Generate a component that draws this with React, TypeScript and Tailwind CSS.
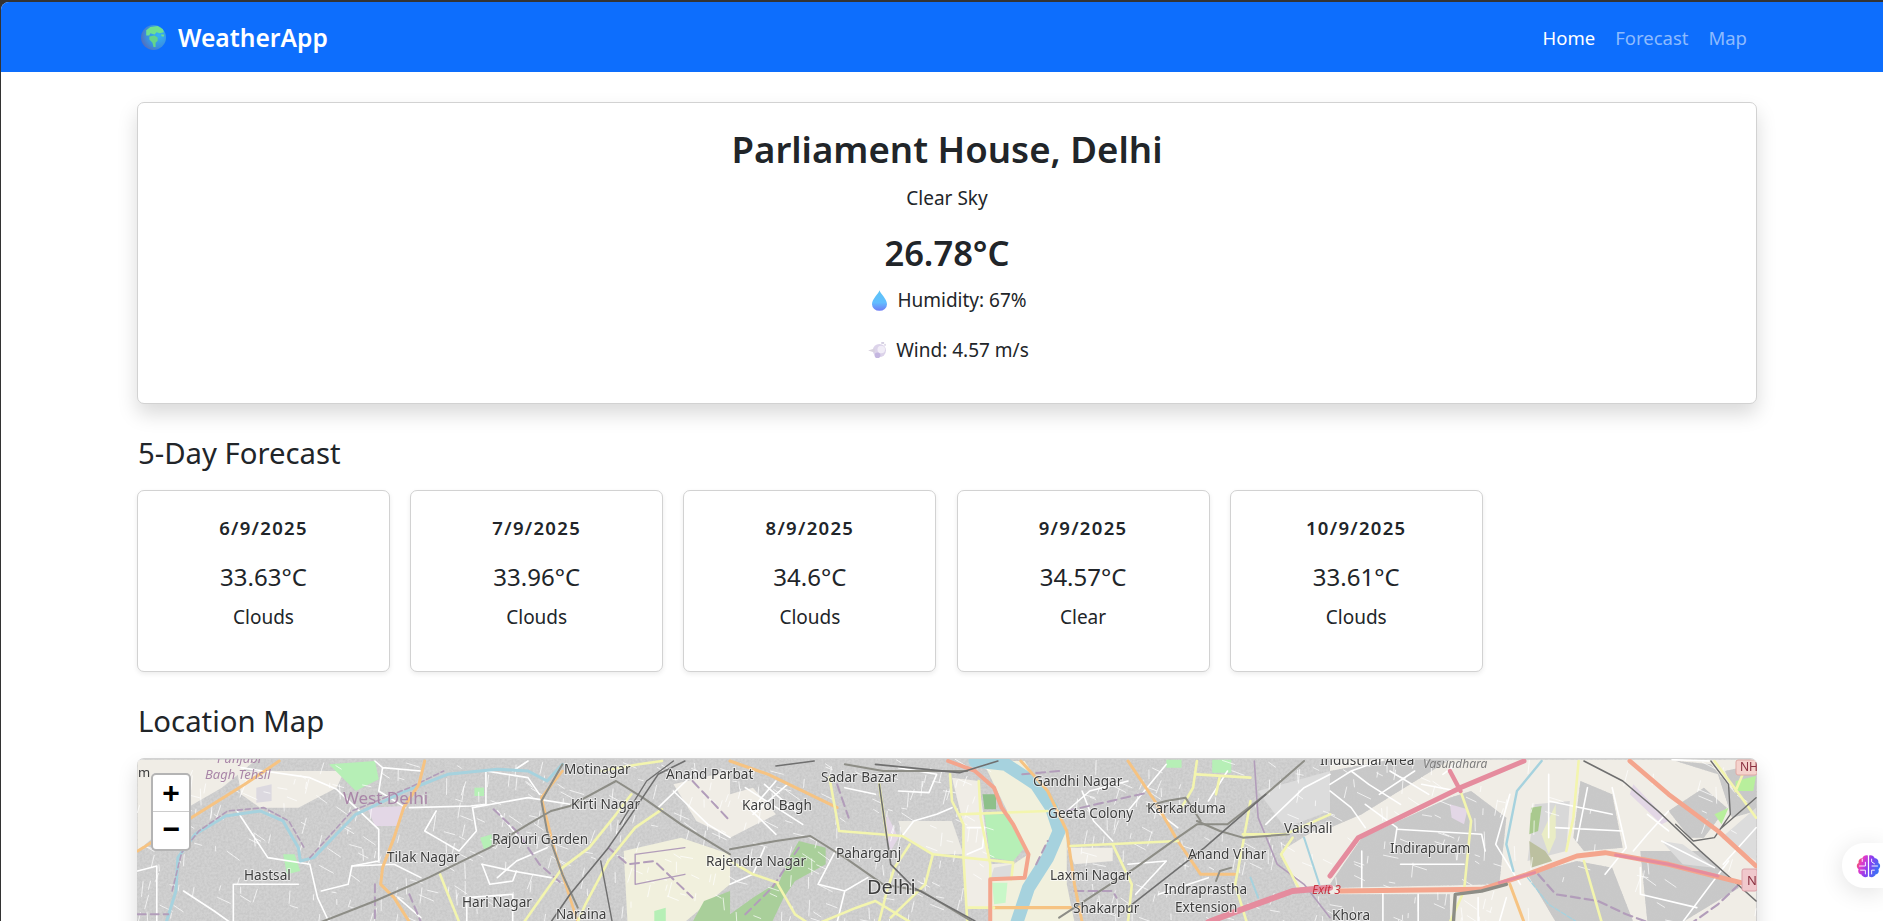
import React from "react";

const forecast = [
  { date: "6/9/2025", temp: "33.63°C", desc: "Clouds" },
  { date: "7/9/2025", temp: "33.96°C", desc: "Clouds" },
  { date: "8/9/2025", temp: "34.6°C", desc: "Clouds" },
  { date: "9/9/2025", temp: "34.57°C", desc: "Clear" },
  { date: "10/9/2025", temp: "33.61°C", desc: "Clouds" },
];

const WHITE = "#ffffff";
const YELLOW = "#f3f5ae";
const ORANGE = "#f6c382";
const TRUNK = "#f4a58d";
const PINK = "#e58c9e";
const METRO = "#8d8d86";
const RAIL = "#6f6f6f";
const ADMIN = "#b29dba";
const WATER = "#a6d2de";
const BUILT = "#c9c9c9";

type Line = [string, number, string, string?];

// coordinates below are in crop space, each group gets its own transform
const westFills: [string, string][] = [
  ["#f0ede6", "M20 26L330 26L240 110L120 190L60 260L20 300Z"],
  ["#f0ede6", "M280 60L560 60L540 110L440 170L340 170L290 130Z"],
  ["#f1f0dd", "M1290 300L1440 260L1568 310L1568 400L1450 513L1300 513Z"],
  ["#f0ede6", "M1420 100L1568 60L1568 260L1480 210Z"],
  ["#dcd9e0", "M330 110L370 100L370 150L330 155Z"],
  ["#e3d7e6", "M620 170L720 165L700 225L640 225Z"],
  ["#b6efb6", "M520 40L640 30L650 85L590 120Z"],
  ["#b6efb6", "M400 310L430 310L445 360L410 370Z"],
  ["#b6efb6", "M915 260L945 250L945 290L925 295Z"],
  ["#b6efb6", "M900 110L925 110L925 135L900 135Z"],
  ["#a9cf9a", "M1470 513L1500 450L1568 420L1568 513Z"],
  ["#b6efb6", "M1370 480L1400 470L1400 513L1370 513Z"],
];

const westLines: Line[] = [
  [WHITE, 1.6, "M290 50L470 80L540 115L590 170L650 235L650 330L580 345L570 400L500 420"],
  [WHITE, 1.6, "M280 180L360 320L470 340L490 440L520 513"],
  [WHITE, 1.6, "M270 513L270 400L440 400"],
  [WHITE, 1.6, "M20 360L70 345L70 513"],
  [WHITE, 1.6, "M140 420L220 480L260 513"],
  [WHITE, 1.6, "M800 180L770 240L800 260L860 300L905 240L895 170L1040 140L1150 160"],
  [WHITE, 1.6, "M730 170L890 165L930 160L930 60L1040 80L1070 130"],
  [WHITE, 1.6, "M760 60L660 50L640 30M660 50L650 120L720 170"],
  [WHITE, 1.6, "M920 340L1000 360L1100 380M960 380L1010 330L1090 290"],
  [WHITE, 1.6, "M920 340L940 400L1000 390L1010 360M1000 60L1040 30"],
  [WHITE, 1.6, "M580 345L690 340L760 380M960 180L1030 280M700 440L760 500"],
  [WHITE, 1.6, "M880 440L1000 430L1000 513M880 440L880 513"],
  [WHITE, 1.6, "M1420 120L1510 220L1568 260M1380 170L1480 60"],
  [ADMIN, 1.4, "M1320 310L1450 290M1320 310L1320 400L1450 370"],
  [WATER, 3, "M95 513L120 420L125 320L170 250L250 195L340 180L400 210L440 290L445 330L480 320L590 190L720 120L830 70L960 55L1040 60L1090 90L1130 40"],
  [ADMIN, 1.6, "M110 420L135 305L180 240L255 180L350 170L415 210L455 290M470 320L580 180L730 110L820 60", "5 3"],
  [ADMIN, 2, "M20 490L100 490M640 400L640 513M730 430L760 513M950 175L1010 240L1070 340L1130 400", "8 5"],
  [ADMIN, 2, "M1250 290L1300 340L1370 330L1470 440M1470 90L1568 210", "9 5"],
  [ORANGE, 3, "M20 300L160 200L300 100L390 30"],
  [ORANGE, 3, "M770 30L755 100L715 170L690 260L660 350L655 400L690 440L730 513"],
  [ORANGE, 2.6, "M1130 60L1075 140L1110 300L1170 513"],
  [YELLOW, 2.6, "M1230 60L1330 40L1390 30"],
  [YELLOW, 2.6, "M1390 175L1320 230L1250 330L1190 460L1170 513"],
  [YELLOW, 2.6, "M1310 130L1270 190L1200 290L1130 350L1050 480L1030 513"],
  [YELLOW, 2.6, "M810 370L860 513"],
  [METRO, 2, "M500 513L640 450L780 380L940 290L1040 220L1100 180L1150 165L1270 90L1340 140L1440 220L1568 310"],
  [METRO, 2, "M1130 40L1075 150L1090 240L1130 370L1170 470"],
  [RAIL, 1.6, "M1450 30L1380 70L1310 190L1250 290L1150 430L1100 513"],
  [RAIL, 1.4, "M1420 30L1350 90L1280 220M1230 330L1260 513"],
];

const centreFills: [string, string][] = [
  ["#f1f0dd", "M660 30L770 30L880 230L880 400L900 513L680 513L680 385L780 310Z"],
  ["#f0ede6", "M580 80L650 90L680 340L740 335L735 385L680 385L680 470L620 470L610 320L610 220Z"],
  ["#eceae3", "M440 210L580 210L610 310L530 310L450 255Z"],
  ["#b6efb6", "M665 190L730 190L770 290L740 330L680 320Z"],
  ["#c8f7c8", "M685 395L725 395L720 455L690 460Z"],
  ["#a9cf9a", "M0 490L60 440L130 390L150 330L180 270L250 290L250 340L170 390L140 440L110 513L0 513Z"],
  ["#8ec08a", "M660 130L695 130L695 175L665 175Z"],
  ["#f0ede6", "M880 290L1000 290L1000 330L900 340Z"],
  ["#f0ede6", "M0 130L60 110L120 190L0 260Z"],
  ["#f0ede6", "M1440 300L1568 210L1568 400L1480 410Z"],
  ["#dcdcdc", "M690 350L740 340L735 385L680 385Z"],
  ["#dcdcdc", "M1380 120L1568 60L1568 180L1450 230Z"],
  ["#b6efb6", "M1140 26L1180 26L1180 50L1140 50ZM1260 26L1310 26L1310 65L1260 65Z"],
  ["#e3d7e6", "M410 190L440 260L420 300L405 240Z"],
];

const centreLines: Line[] = [
  [WHITE, 1.6, "M40 110L190 220M60 190L150 100M30 150L120 250M90 100L180 190M120 90L60 170"],
  [WHITE, 1.6, "M0 400L60 370L90 290M280 290L230 400L300 420L360 380M300 420L280 513"],
  [WHITE, 1.6, "M450 255L480 210L540 190L580 170M620 230L665 230L660 290L620 310"],
  [WHITE, 1.6, "M880 180L940 120L1040 90M920 120L950 210L1000 270M1040 340L1140 330L1060 430M1120 430L1250 380"],
  [WHITE, 1.6, "M1090 160L1170 230M1140 40L1040 180M1400 220L1500 110L1568 70M1250 150L1300 60"],
  [WHITE, 1.6, "M440 50L540 70L520 125L440 120M300 110L380 130"],
  [WATER, 13, "M640 30L720 40L800 100L840 170L860 240L830 320L780 410L750 513"],
  [WATER, 2, "M1360 380L1380 440M1500 260L1540 400"],
  [ADMIN, 2, "M280 100L310 200M860 60L760 70M880 180L1090 125M900 420L1000 420L1010 440", "9 5"],
  [ADMIN, 1.6, "M1370 30L1380 200L1430 340L1500 400L1568 500"],
  [ADMIN, 2, "M40 490L110 410L180 290M800 340L830 270", "8 5"],
  [ORANGE, 3, "M0 30L100 70L280 170"],
  [ORANGE, 3, "M760 30L830 120L880 240L900 400L920 513"],
  [ORANGE, 3, "M1040 30L1110 150L1170 270L1230 370L1320 370"],
  [ORANGE, 3.4, "M690 470L890 470"],
  [YELLOW, 2.6, "M600 190L830 180"],
  [YELLOW, 2.6, "M575 70L580 150L610 220L610 320L620 513M650 90L655 200L680 340L680 470"],
  [YELLOW, 2.6, "M450 255L530 310L740 335L735 385M260 80L285 240L450 255M390 100L410 260"],
  [YELLOW, 2.6, "M390 510L410 420L430 350L470 280M530 310L510 400L420 500"],
  [YELLOW, 2.6, "M125 400L170 490L200 513M0 330L60 370L125 395M240 513L330 470L380 450L470 513"],
  [YELLOW, 2.6, "M620 470L690 470M890 285L1170 270M1000 280L1050 400L1040 513"],
  [YELLOW, 2.6, "M1220 30L1210 110L1180 170M1220 70L1360 80M1280 75L1270 130M1360 150L1340 280L1320 400L1350 513"],
  [YELLOW, 2.6, "M1568 190L1450 250L1340 250M1470 260L1440 310L1490 420"],
  [TRUNK, 4, "M570 30L640 60L690 110L710 170L740 220L780 310L770 380L680 385L680 513"],
  [PINK, 6, "M1250 513L1350 470L1470 420L1568 410"],
  [METRO, 2, "M0 295L120 270L210 255L300 320L400 400L500 420L630 510"],
  [METRO, 2, "M860 500L1060 350L1170 260L1220 220L1300 220L1400 130L1500 30"],
  [METRO, 2, "M1220 210L1280 240L1340 260L1460 250M1270 390L1280 360L1310 350"],
  [METRO, 2, "M1090 165L1140 150L1190 140L1230 210M300 40L400 60L500 60L620 60"],
  [RAIL, 1.6, "M390 100L410 260L420 340L480 410L640 510"],
  [RAIL, 1.6, "M120 45L220 30M380 40L600 65L700 30M1040 470L1240 290L1400 130"],
];

const eastFills: [string, string][] = [
  ["#f0ede6", "M0 26L1208 26L1208 513L0 513Z"],
  [BUILT, "M0 60L170 26L340 26L90 190L0 230Z"],
  [BUILT, "M90 260L340 140L400 120L500 200L480 400L20 410L0 400Z"],
  [BUILT, "M710 90L800 130L830 290L720 300L690 260Z"],
  ["#d8d8d8", "M580 160L680 150L670 300L560 330Z"],
  [BUILT, "M880 300L1050 300L1160 410L1000 513L900 513Z"],
  [BUILT, "M560 370L700 330L800 350L860 513L640 513Z"],
  [BUILT, "M960 180L1060 110L1125 170L1060 260L1020 260Z"],
  [BUILT, "M980 30L1080 40L1150 130L1120 60L1208 40L1208 180L1140 200L1100 70Z"],
  [BUILT, "M0 430L340 430L340 513L0 513Z"],
  ["#dcdcdc", "M1110 260L1208 170L1208 330ZM940 270L1000 280L1090 350L1000 340Z"],
  ["#a9c98e", "M570 170L600 165L590 240L565 250Z"],
  ["#bcc0a0", "M565 270L610 300L630 330L570 350Z"],
  ["#e9ecc5", "M600 250L640 160L640 260L620 310Z"],
  ["#b8ef9c", "M1090 190L1130 170L1110 220ZM1150 90L1208 75L1200 120L1150 120Z"],
  ["#e3d7e6", "M340 160L390 175L380 220L345 200ZM860 100L960 210L940 220L850 130Z"],
];

const eastLines: Line[] = [
  [WHITE, 1.6, "M0 100L60 60L110 100M60 60L150 26M110 100L200 160M170 60L280 130M240 60L140 130M100 160L190 230L180 300"],
  [WHITE, 1.6, "M190 235L430 250L440 300M90 300L90 420M200 340L380 340M150 420L150 513M250 513L250 430"],
  [WHITE, 1.6, "M0 120L60 170L100 230M370 30L320 70M260 100L360 120"],
  [WHITE, 1.6, "M510 130L470 280L540 400M620 70L620 260M620 150L800 190M730 110L700 270M640 230L830 240"],
  [WHITE, 1.6, "M800 110L840 290L780 370M860 300L900 250L960 180M880 350L880 430L1040 470M1000 513L1080 400L1130 330"],
  [WHITE, 1.6, "M940 270L1090 350M1115 340L1208 230M900 190L960 240M970 26L1075 30"],
  [WHITE, 1.6, "M420 440L420 513M480 513L500 440"],
  [WATER, 2.4, "M600 30L530 120L500 280L520 360"],
  [WATER, 1.4, "M560 380L620 460L700 513", "5 2"],
  [ADMIN, 2.2, "M590 370L640 430L760 450L840 490L900 513M1160 400L1100 460L1030 513", "9 5"],
  [ORANGE, 3, "M510 400L550 513"],
  [YELLOW, 2.6, "M370 120L400 210L380 420L340 513"],
  [YELLOW, 2.6, "M705 30L690 200L670 300M720 330L770 513"],
  [YELLOW, 2.6, "M1090 30L1160 130L1208 200M1170 70L1150 120"],
  [PINK, 4.4, "M340 60L370 120"],
  [PINK, 5, "M0 375L80 260L370 110L550 30"],
  [RAIL, 1.6, "M720 30L830 90L930 180L1050 300L1208 450"],
  [RAIL, 1.4, "M1080 30L1130 100L1135 190L1090 260L1030 270L980 220M1100 240L1208 140"],
  [TRUNK, 5, "M30 420L430 415L560 370L700 315L780 305L960 340L1165 395"],
  [PINK, 3, "M810 312L960 340L1100 375M480 395L580 365"],
  [METRO, 3.4, "M350 513L355 430L430 420L500 400"],
  [TRUNK, 4.6, "M850 30L960 130L1100 240L1208 345"],
];

// side streets, too many to trace by hand: seeded so every run looks the same
function buildStreets() {
  let seed = 20250906;
  const rnd = () => {
    seed = (seed * 1664525 + 1013904223) % 4294967296;
    return seed / 4294967296;
  };
  let d = "";
  for (let i = 0; i < 760; i++) {
    const x = 137 + rnd() * 1620;
    const y = 758 + rnd() * 163;
    // keep the river banks and the far east clean
    if (x > 985 && x < 1075) continue;
    if (x > 1500 && rnd() < 0.7) continue;
    const tilt = rnd() < 0.5 ? 0.15 : 1.45;
    const angle = tilt + rnd() * 0.5;
    const len = 5 + rnd() * 12;
    d += `M${x.toFixed(1)} ${y.toFixed(1)}L${(x + Math.cos(angle) * len).toFixed(1)} ${(y + Math.sin(angle) * len).toFixed(1)}`;
  }
  return d;
}

const streets = buildStreets();

type Label = [string, number, number, number?];

const labels: Label[] = [
  ["Motinagar", 564, 773],
  ["Anand Parbat", 666, 778],
  ["Kirti Nagar", 571, 808],
  ["Rajouri Garden", 492, 843],
  ["Tilak Nagar", 387, 861],
  ["Hastsal", 244, 879],
  ["Hari Nagar", 462, 906],
  ["Naraina", 556, 918],
  ["Rajendra Nagar", 706, 865],
  ["Sadar Bazar", 821, 781],
  ["Karol Bagh", 742, 809],
  ["Gandhi Nagar", 1033, 785],
  ["Geeta Colony", 1048, 817],
  ["Karkarduma", 1147, 812],
  ["Vaishali", 1284, 832],
  ["Paharganj", 836, 857],
  ["Anand Vihar", 1188, 858],
  ["Laxmi Nagar", 1050, 879],
  ["Delhi", 867, 893, 20],
  ["Indraprastha", 1164, 893],
  ["Extension", 1175, 911],
  ["Shakarpur", 1073, 912],
  ["Industrial Area", 1320, 764],
  ["Indirapuram", 1390, 852],
  ["Khora", 1332, 919],
];

function Strokes({ lines }: { lines: Line[] }) {
  return (
    <>
      {lines.map(([color, width, d, dash], i) => (
        <path
          key={i}
          d={d}
          fill="none"
          stroke={color}
          strokeWidth={width}
          strokeDasharray={dash}
          strokeLinecap="round"
          strokeLinejoin="round"
          vectorEffect="non-scaling-stroke"
        />
      ))}
    </>
  );
}

function Fills({ fills }: { fills: [string, string][] }) {
  return (
    <>
      {fills.map(([color, d], i) => (
        <path key={i} d={d} fill={color} filter={color === BUILT ? "url(#urban)" : undefined} />
      ))}
    </>
  );
}

function MapTiles() {
  return (
    <svg viewBox="137 758 1620 163" className="block w-full h-[163px] blur-[0.55px]">
      <defs>
        <filter id="urban" x="0" y="0" width="100%" height="100%">
          <feTurbulence type="fractalNoise" baseFrequency="0.42" numOctaves="2" seed="4" />
          <feColorMatrix values="0 0 0 0 0.58  0 0 0 0 0.58  0 0 0 0 0.58  2.4 0 0 0 -0.75" />
          <feComposite in2="SourceGraphic" operator="in" result="speck" />
          <feMerge>
            <feMergeNode in="SourceGraphic" />
            <feMergeNode in="speck" />
          </feMerge>
        </filter>
      </defs>
      <rect x="137" y="758" width="1620" height="163" fill="#d2d2d2" filter="url(#urban)" />
      <g transform="translate(130 750) scale(0.3827 0.3333)">
        <Fills fills={westFills} />
      </g>
      <g transform="translate(730 750) scale(0.3827 0.3333)">
        <Fills fills={centreFills} />
      </g>
      <g transform="translate(1330 750) scale(0.3527 0.3333)">
        <Fills fills={eastFills} />
      </g>
      <path d={streets} fill="none" stroke="#ffffff" strokeWidth="1" strokeOpacity="0.7" />
      <g transform="translate(130 750) scale(0.3827 0.3333)">
        <Strokes lines={westLines} />
      </g>
      <g transform="translate(730 750) scale(0.3827 0.3333)">
        <Strokes lines={centreLines} />
      </g>
      <g transform="translate(1330 750) scale(0.3527 0.3333)">
        <Strokes lines={eastLines} />
      </g>
      <rect x="1736" y="759" width="21" height="15" rx="2" fill="#f5d2cc" stroke="#e0a9a4" />
      <rect x="1742" y="868" width="15" height="22" rx="2" fill="#f0c8cc" stroke="#dca0a8" />
      <g fontFamily="'Noto Sans', sans-serif">
        {labels.map(([text, x, y, size]) => (
          <text key={text} x={x} y={y} fontSize={size ?? 13.6} fill="#3d3d3d" stroke="#ffffff" strokeOpacity={0.6} strokeWidth={1.8} paintOrder="stroke">
            {text}
          </text>
        ))}
        <text x="343" y="803" fontSize="17" fill="#a986a8">West Delhi</text>
        <text x="205" y="778" fontSize="13" fontStyle="italic" fill="#a986a8">Bagh Tehsil</text>
        <text x="217" y="762" fontSize="13" fontStyle="italic" fill="#a986a8">Punjabi</text>
        <text x="1423" y="767" fontSize="12" fontStyle="italic" fill="#7d7d7d">Vasundhara</text>
        <text x="1312" y="893" fontSize="12" fontStyle="italic" fill="#c8323f">Exit 3</text>
        <text x="138" y="776" fontSize="13" fill="#3d3d3d">m</text>
        <text x="1740" y="770" fontSize="12" fill="#8a3040">NH</text>
        <text x="1747" y="884" fontSize="13" fill="#8a3040">N</text>
      </g>
    </svg>
  );
}

function GlobeIcon() {
  return (
    <svg viewBox="0 0 24 24" className="w-[25px] h-[25px] shrink-0">
      <defs>
        <radialGradient id="sea" cx="0.7" cy="0.4" r="0.8">
          <stop offset="0" stopColor="#35b4f4" />
          <stop offset="0.6" stopColor="#3a8fe0" />
          <stop offset="1" stopColor="#5b62b0" />
        </radialGradient>
      </defs>
      <circle cx="12" cy="12" r="12" fill="url(#sea)" />
      <path d="M5 5L9 2L16 1L21 4L22 7L18 8L15 7L13 9L9 8L8 10L5 10Z" fill="#6fe08f" />
      <path d="M8 11L13 10L16 12L16 15L14 17L14 21L12 21L11 17L8 14Z" fill="#64d48a" />
      <path d="M19 9L22 9L22 11L20 11Z" fill="#6fe08f" />
    </svg>
  );
}

function DropIcon() {
  return (
    <svg viewBox="0 0 16 22" className="w-[15px] h-[21px] shrink-0">
      <defs>
        <linearGradient id="drop" x1="0" y1="0" x2="0" y2="1">
          <stop offset="0" stopColor="#5cc4f5" />
          <stop offset="0.6" stopColor="#62bdff" />
          <stop offset="1" stopColor="#6f7cf5" />
        </linearGradient>
      </defs>
      <path d="M8 0C9 4 16 9 16 15A8 7 0 0 1 0 15C0 9 7 4 8 0Z" fill="url(#drop)" />
    </svg>
  );
}

function WindIcon() {
  return (
    <svg viewBox="0 0 20 18" className="w-[19px] h-[17px] shrink-0 blur-[0.4px]">
      <circle cx="12" cy="9" r="7" fill="#dcd3ea" />
      <circle cx="14" cy="8" r="4" fill="#f1edf7" />
      <circle cx="10" cy="14" r="3" fill="#c4b6e0" />
      <path d="M0 9L7 7L7 11Z" fill="#d8d2de" />
      <rect x="14" y="0" width="3" height="2" fill="#d5cfe2" />
      <rect x="17" y="2" width="2" height="2" fill="#e0dbe9" />
    </svg>
  );
}

function BrainIcon() {
  return (
    <svg viewBox="0 0 24 24" className="w-[25px] h-[26px] blur-[0.3px]">
      <defs>
        <linearGradient id="brain" x1="0" y1="0" x2="1" y2="0.4">
          <stop offset="0" stopColor="#f97316" />
          <stop offset="0.3" stopColor="#e33bc8" />
          <stop offset="0.6" stopColor="#8b3df0" />
          <stop offset="1" stopColor="#3f6ff5" />
        </linearGradient>
      </defs>
      <path
        d="M11.4 2V22C9 23.5 6 22.5 5 20C2.5 19.5 1.5 17 2.5 15C0 13 0.5 10 2.5 9C2 6 4 4.5 6 4.5C7 2 9.5 1 11.4 2ZM12.6 2C14.5 1 17 2 18 4.5C20 4.5 22 6 21.5 9C23.5 10 24 13 21.5 15C22.5 17 21.5 19.5 19 20C18 22.5 15 23.5 12.6 22Z"
        fill="url(#brain)"
      />
      <path
        d="M3 12H9V8M6 5V8M9 16H4M9 16V20M15 5V8L18 10M21 12H15M18 16H15V20"
        fill="none"
        stroke="#ffffff"
        strokeWidth="0.9"
      />
    </svg>
  );
}

export default function App() {
  return (
    <div className="h-screen overflow-hidden bg-[#333333] pt-[2px] pl-[1px] font-['Noto_Sans',sans-serif] text-[#212529]">
      <div className="h-full overflow-hidden rounded-tl-[8px] bg-white">
        {/* navbar */}
        <nav className="h-[70px] bg-[#0d6efd] flex items-center justify-between pl-[140px] pr-[136px] pt-[2px]">
          <div className="flex items-center gap-[12px]">
            <GlobeIcon />
            <span className="text-[24.6px] font-semibold text-white">WeatherApp</span>
          </div>
          <div className="flex items-center gap-[20px] text-[18.5px]">
            <span className="text-white">Home</span>
            <span className="text-[#8dbbfe]">Forecast</span>
            <span className="text-[#8dbbfe]">Map</span>
          </div>
        </nav>

        <main className="ml-[136px] w-[1620px]">
          {/* current weather */}
          <section className="mt-[30px] h-[302px] rounded-[7px] border border-[#d2d2d2] bg-white pt-[22px] text-center shadow-[0_10px_20px_rgba(0,0,0,0.15)]">
            <h1 className="text-[36.6px] leading-[48px] font-semibold">Parliament House, Delhi</h1>
            <p className="mt-[11px] text-[19px] leading-[29px]">Clear Sky</p>
            <p className="mt-[21px] text-[34.5px] leading-[38px] font-semibold">26.78°C</p>
            <p className="mt-[14px] flex items-center justify-center gap-[10px] pl-[5px] text-[19px] leading-[29px]">
              <DropIcon />
              Humidity: 67%
            </p>
            <p className="mt-[21px] flex items-center justify-center gap-[9px] pl-[3px] text-[19px] leading-[29px]">
              <WindIcon />
              Wind: 4.57 m/s
            </p>
          </section>

          <h2 className="mt-[32px] ml-[1px] text-[29.3px] leading-[35px]">5-Day Forecast</h2>
          <div className="mt-[19px] flex gap-[20.2px]">
            {forecast.map((day) => (
              <div
                key={day.date}
                className="w-[253px] h-[182px] rounded-[7px] border border-[#d2d2d2] bg-white text-center shadow-[0_2px_5px_rgba(0,0,0,0.08)] pt-[23px]"
              >
                <p className="text-[18.5px] leading-[27px] font-semibold tracking-[1.3px]">{day.date}</p>
                <p className="mt-[21px] text-[24px] leading-[30px]">{day.temp}</p>
                <p className="mt-[12px] text-[19px] leading-[27px]">{day.desc}</p>
              </div>
            ))}
          </div>

          <h2 className="mt-[32px] ml-[1px] text-[29.3px] leading-[35px]">Location Map</h2>
          <div className="relative mt-[19px] h-[480px] overflow-hidden rounded-[7px] border-t border-[#d2d2d2] shadow-[0_10px_20px_rgba(0,0,0,0.15)]">
            <MapTiles />
            {/* zoom control */}
            <div className="absolute left-[14px] top-[14px] w-[40px] rounded-[5px] border-[2px] border-[#b4b4b4] bg-white font-['Liberation_Mono',monospace] font-bold text-black">
              <div className="h-[37px] border-b border-[#cccccc] text-center text-[30px] leading-[40px]">+</div>
              <div className="h-[37px] text-center text-[30px] leading-[39px]">−</div>
            </div>
          </div>
        </main>
      </div>

      {/* floating assistant button */}
      <div className="fixed right-0 top-[843px] flex h-[45px] w-[41px] items-center justify-end rounded-l-[22px] bg-white pr-[2px] shadow-[0_4px_24px_rgba(0,0,0,0.12)]">
        <BrainIcon />
      </div>
    </div>
  );
}
